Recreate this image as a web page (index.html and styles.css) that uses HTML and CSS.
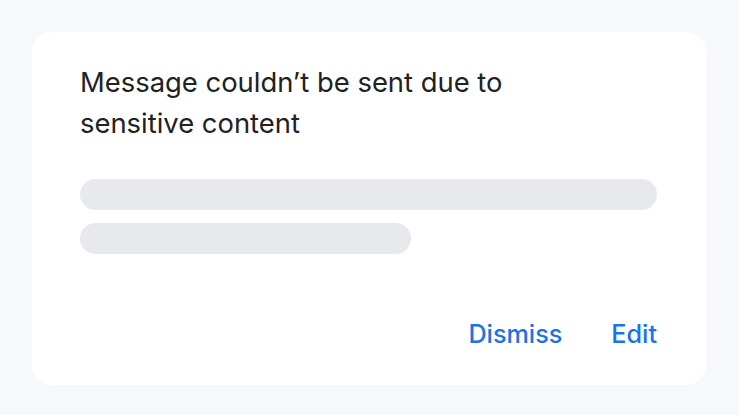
FILE: index.html
```html
<!DOCTYPE html>
<html lang="en">
<head>
    <meta charset="UTF-8">
    <meta name="viewport" content="width=device-width, initial-scale=1.0">
    <title>Message not sent</title>
    <link rel="stylesheet" href="styles.css">
</head>
<body>
    <div class="dialog">
        <h2 class="dialog-title">Message couldn’t be sent due to sensitive content</h2>

        <div class="placeholder">
            <div class="placeholder-line"></div>
            <div class="placeholder-line short"></div>
        </div>

        <div class="dialog-actions">
            <button type="button" class="text-button">Dismiss</button>
            <button type="button" class="text-button">Edit</button>
        </div>
    </div>
</body>
</html>
```

FILE: styles.css
```css
body {
    font-family: Inter, Roboto, Arial, sans-serif;
    background-color: #f7f8fc;
    margin: 0;
    padding: 32px;
}
.dialog {
    width: 674px;
    height: 353px;
    box-sizing: border-box;
    background-color: #fff;
    border-radius: 20px;
    padding: 30px 49px 0 48px;
    display: flex;
    flex-direction: column;
}
.dialog-title {
    margin: 0;
    width: 480px;
    font-size: 27.4px;
    font-weight: 400;
    line-height: 41px;
    color: #202124;
}
.placeholder {
    margin-top: 35px;
    display: flex;
    flex-direction: column;
    gap: 13px;
}
.placeholder-line {
    height: 31px;
    border-radius: 16px;
    background-color: #e8e9ed;
}
.placeholder-line.short {
    width: 331px;
}
.dialog-actions {
    margin-top: auto;
    margin-bottom: 36px;
    display: flex;
    justify-content: flex-end;
    gap: 49px;
}
.text-button {
    background: none;
    border: none;
    padding: 0;
    font-family: inherit;
    font-size: 25.2px;
    font-weight: 500;
    color: #1a73e8;
    line-height: 30px;
    cursor: pointer;
}
```
